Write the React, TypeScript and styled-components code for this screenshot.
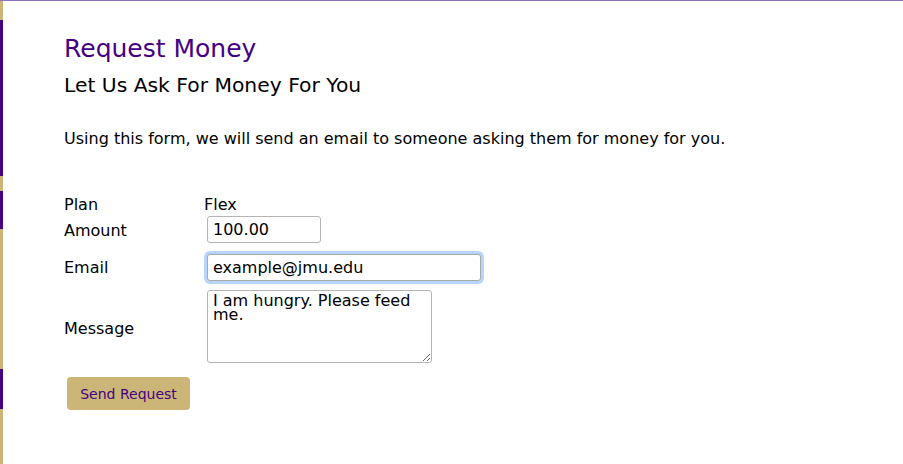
import React from "react";
import styled, { createGlobalStyle } from "styled-components";

const GlobalStyle = createGlobalStyle`
  html, body {
    margin: 0;
    padding: 0;
    background: #ffffff;
  }
  body {
    font-family: "DejaVu Sans", Verdana, sans-serif;
    color: #000000;
  }
`;

const gold = "#CBB677";
const purple = "#450084";

const Page = styled.div`
  display: flex;
  min-height: 464px;
  border-top: 1px solid #8f72b6;
  box-sizing: border-box;
`;

const Stripe = styled.div`
  display: flex;
  flex-direction: column;
  width: 3px;
  flex-shrink: 0;
`;

const Segment = styled.div<{ $color: string; $h: number }>`
  height: ${(p) => p.$h}px;
  background: ${(p) => p.$color};
  flex-shrink: 0;
`;

const Main = styled.main`
  flex: 1;
  padding: 33px 0 0 61px;
`;

const Title = styled.h1`
  margin: 0;
  font-size: 25px;
  font-weight: normal;
  line-height: 30px;
  color: ${purple};
`;

const Subtitle = styled.h2`
  margin: 10px 0 0;
  font-size: 20.3px;
  font-weight: normal;
  line-height: 23px;
  color: #000;
`;

const Intro = styled.p`
  margin: 32px 0 0;
  font-size: 16px;
  line-height: 19px;
`;

const Form = styled.form`
  margin-top: 47px;
  display: flex;
  flex-direction: column;
`;

const Row = styled.div<{ $mt: number }>`
  display: grid;
  grid-template-columns: 140px 1fr;
  align-items: center;
  margin-top: ${(p) => p.$mt}px;
  font-size: 16px;
  line-height: 19px;
`;

const Label = styled.label<{ $pt?: number }>`
  font-size: 16px;
  padding-top: ${(p) => p.$pt ?? 0}px;
`;

const Value = styled.span`
  font-size: 16px;
`;

const TextInput = styled.input<{ $w: number; $focus?: boolean }>`
  display: block;
  width: ${(p) => p.$w}px;
  height: 27px;
  box-sizing: border-box;
  margin: 0 0 0 3px;
  padding: 3px 5px;
  font-family: "DejaVu Sans", Verdana, sans-serif;
  font-size: 16px;
  color: #000;
  border: 1px solid ${(p) => (p.$focus ? "#a9a9a9" : "#b5b5b5")};
  border-radius: 3px;
  outline: none;
  box-shadow: ${(p) => (p.$focus ? "0 0 0 3px #b7d5fa" : "none")};
`;

const MessageArea = styled.textarea`
  display: block;
  width: 225px;
  height: 73px;
  box-sizing: border-box;
  margin: 0 0 0 3px;
  padding: 3px 5px;
  font-family: "DejaVu Sans", Verdana, sans-serif;
  font-size: 16px;
  line-height: 14px;
  color: #000;
  border: 1px solid #b5b5b5;
  border-radius: 3px;
  outline: none;
  resize: both;
`;

const SendButton = styled.button`
  align-self: flex-start;
  margin: 14px 0 0 3px;
  width: 123px;
  height: 33px;
  background: ${gold};
  color: ${purple};
  border: none;
  border-radius: 4px;
  font-family: "DejaVu Sans", Verdana, sans-serif;
  font-size: 14px;
  padding: 0;
`;

const segments: { color: string; h: number }[] = [
  { color: gold, h: 19 },
  { color: purple, h: 156 },
  { color: gold, h: 15 },
  { color: purple, h: 38 },
  { color: gold, h: 140 },
  { color: purple, h: 40 },
  { color: gold, h: 60 },
];

export default function App() {
  return (
    <>
      <GlobalStyle />
      <Page>
        <Stripe>
          {segments.map((s, i) => (
            <Segment key={i} $color={s.color} $h={s.h} />
          ))}
        </Stripe>
        <Main>
          <Title>Request Money</Title>
          <Subtitle>Let Us Ask For Money For You</Subtitle>
          <Intro>
            Using this form, we will send an email to someone asking them for money for you.
          </Intro>
          <Form onSubmit={(e) => e.preventDefault()}>
            <Row $mt={0}>
              <Label>Plan</Label>
              <Value>Flex</Value>
            </Row>
            <Row $mt={2}>
              <Label $pt={1}>Amount</Label>
              <div>
                <TextInput $w={114} defaultValue="100.00" />
              </div>
            </Row>
            <Row $mt={11}>
              <Label>Email</Label>
              <div>
                <TextInput $w={274} $focus defaultValue="example@jmu.edu" />
              </div>
            </Row>
            <Row $mt={9}>
              <Label $pt={3}>Message</Label>
              <div>
                <MessageArea defaultValue="I am hungry. Please feed me." />
              </div>
            </Row>
            <SendButton type="submit">Send Request</SendButton>
          </Form>
        </Main>
      </Page>
    </>
  );
}
